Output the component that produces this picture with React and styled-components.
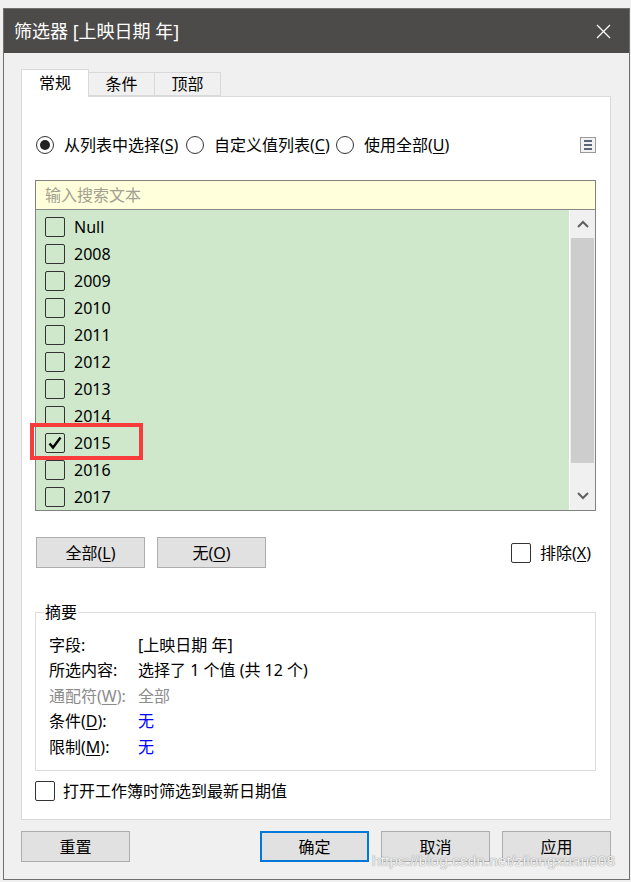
import React from 'react'
import styled, { createGlobalStyle } from 'styled-components'

const GlobalStyle = createGlobalStyle`
  body {
    margin: 0;
    background: #f0f0f0;
    font-family: "Noto Sans", "Noto Sans CJK SC", sans-serif;
    font-size: 16px;
    line-height: 20px;
    color: #000;
  }
`

const Page = styled.div`
  position: relative;
  width: 631px;
  height: 882px;
  box-sizing: border-box;
  padding: 8px 1px 2px 3px;
  background: #f0f0f0;
`

const Dialog = styled.div`
  height: 872px;
  box-sizing: border-box;
  border: 1px solid #6f6f6f;
  display: flex;
  flex-direction: column;
  background: #f0f0f0;
`

const TitleBar = styled.div`
  height: 44px;
  flex-shrink: 0;
  display: flex;
  align-items: center;
  justify-content: space-between;
  padding: 0 18px 0 10px;
  background: #4d4b49;
  color: #fff;
  font-size: 18px;
`

const Body = styled.div`
  flex: 1;
  padding: 16px 18px 0 17px;
`

const TabStrip = styled.div`
  display: flex;
  align-items: flex-end;
  height: 27px;
`

const Tab = styled.div`
  position: relative;
  width: ${p => p.w}px;
  height: ${p => (p.active ? 28 : 24)}px;
  margin-bottom: ${p => (p.active ? -1 : 0)}px;
  margin-left: ${p => (p.first ? 0 : -1)}px;
  box-sizing: border-box;
  border: 1px solid #d9d9d9;
  border-bottom: ${p => (p.active ? 'none' : '1px solid #d9d9d9')};
  background: ${p => (p.active ? '#fff' : '#f0f0f0')};
  z-index: ${p => (p.active ? 2 : 1)};
  display: flex;
  align-items: center;
  justify-content: center;
  padding-bottom: ${p => (p.active ? 2 : 0)}px;
`

const Panel = styled.div`
  height: 724px;
  box-sizing: border-box;
  border: 1px solid #d9d9d9;
  background: #fff;
  padding: 38px 14px 0 13px;
`

const RadioRow = styled.div`
  display: flex;
  align-items: center;
  height: 20px;
`

const RadioOption = styled.label`
  display: flex;
  align-items: center;
  width: ${p => p.w}px;
  gap: 10px;
  white-space: nowrap;
`

const RadioCircle = styled.span`
  width: 18px;
  height: 18px;
  margin-left: 1px;
  box-sizing: border-box;
  border: 1px solid #333;
  border-radius: 50%;
  display: flex;
  align-items: center;
  justify-content: center;
  background: #fff;

  &::after {
    content: '';
    width: 10px;
    height: 10px;
    border-radius: 50%;
    background: #222;
    display: ${p => (p.on ? 'block' : 'none')};
  }
`

const Key = styled.span`
  text-decoration: underline;
  text-underline-offset: 2px;
`

const MenuButton = styled.div`
  margin-left: auto;
  width: 16px;
  height: 16px;
  box-sizing: border-box;
  border: 1px solid #9a9a9a;
  background: #f2f2f2;
  display: flex;
  flex-direction: column;
  align-items: center;
  justify-content: center;
  gap: 2px;

  span {
    width: 8px;
    height: 2px;
    background: #5c6778;
  }
`

const ListBox = styled.div`
  margin-top: 25px;
  border: 1px solid #828282;
`

const Search = styled.div`
  height: 29px;
  box-sizing: border-box;
  border-bottom: 1px solid #8a8a8a;
  background: #ffffdc;
  padding-left: 9px;
  display: flex;
  align-items: center;
  color: #a3a08f;
`

const ListBody = styled.div`
  display: flex;
  height: 300px;
`

const Items = styled.div`
  flex: 1;
  background: #cfe8cc;
  padding-top: 3px;
  border-right: 1px solid #fff;
`

const Row = styled.div`
  position: relative;
  height: 27px;
  display: flex;
  align-items: center;
  padding-left: 9px;
  gap: 9px;
`

const Box = styled.span`
  width: ${p => p.size || 20}px;
  height: ${p => p.size || 20}px;
  flex-shrink: 0;
  box-sizing: border-box;
  border: 1px solid #333;
  border-radius: 2px;
  background: ${p => p.bg || 'transparent'};
  display: flex;
  align-items: center;
  justify-content: center;
`

const Highlight = styled.div`
  position: absolute;
  left: -6px;
  top: -6px;
  width: 113px;
  height: 37px;
  box-sizing: border-box;
  border: 4px solid #f83b3b;
`

const Scrollbar = styled.div`
  width: 25px;
  background: #f0f0f0;
  display: flex;
  flex-direction: column;
`

const ArrowCell = styled.div`
  height: 28px;
  display: flex;
  align-items: center;
  justify-content: center;
`

const Thumb = styled.div`
  height: 225px;
  margin: 0 1px;
  background: #cdcdcd;
`

const Track = styled.div`
  flex: 1;
`

const ButtonRow = styled.div`
  display: flex;
  align-items: center;
  gap: 12px;
  margin-top: 26px;
  padding-left: 1px;
`

const Button = styled.div`
  width: 109px;
  height: 31px;
  box-sizing: border-box;
  border: ${p => (p.primary ? '2px solid #0078d7' : '1px solid #adadad')};
  background: #e1e1e1;
  display: flex;
  align-items: center;
  justify-content: center;
`

const CheckOption = styled.label`
  display: flex;
  align-items: center;
  gap: ${p => p.gap}px;
  margin-left: ${p => (p.right ? 'auto' : '0')};
  padding-right: ${p => (p.right ? 5 : 0)}px;
`

const Group = styled.fieldset`
  margin: 34px 0 0 0;
  padding: 0;
  border: 1px solid #dcdcdc;
  min-width: 0;
`

const Legend = styled.legend`
  margin-left: 8px;
  padding: 0 1px;
`

const SummaryRows = styled.div`
  padding: 10px 0 10px 13px;
`

const SummaryRow = styled.div`
  display: grid;
  grid-template-columns: 89px 1fr;
  height: 25.5px;
  align-items: center;
  color: ${p => p.color || '#000'};
`

const Value = styled.span`
  color: ${p => p.color || 'inherit'};
`

const LatestRow = styled.div`
  margin-top: 10px;
`

const Footer = styled.div`
  display: flex;
  gap: 12px;
  margin-top: 11px;
`

const Spacer = styled.div`
  flex: 1;
`

const Watermark = styled.div`
  position: absolute;
  left: 372px;
  top: 851px;
  font-family: "Liberation Sans", Arial, sans-serif;
  font-size: 15.5px;
  color: rgba(255, 255, 255, 0.85);
  text-shadow: 0 0 1px #9a9a9a, 0 0 1px #9a9a9a;
  white-space: nowrap;
`

const years = ['Null', '2008', '2009', '2010', '2011', '2012', '2013', '2014', '2015', '2016', '2017']

const Chevron = ({ up }) => (
  <svg width="12" height="8" viewBox="0 0 12 8">
    <path d={up ? 'M1 7 L6 2 L11 7' : 'M1 1 L6 6 L11 1'} fill="none" stroke="#606060" strokeWidth="2" />
  </svg>
)

const Check = () => (
  <svg width="14" height="14" viewBox="0 0 14 14">
    <path d="M1.5 7.5 L5 11.5 L12.5 1.5" fill="none" stroke="#000" strokeWidth="2.4" />
  </svg>
)

export default function App() {
  return (
    <Page>
      <GlobalStyle />
      <Dialog>
        <TitleBar>
          <span>筛选器 [上映日期 年]</span>
          <svg width="15" height="15" viewBox="0 0 15 15">
            <path d="M1 1 L14 14 M14 1 L1 14" stroke="#fff" strokeWidth="1.3" />
          </svg>
        </TitleBar>
        <Body>
          <TabStrip>
            <Tab w={68} active first>常规</Tab>
            <Tab w={67}>条件</Tab>
            <Tab w={67}>顶部</Tab>
          </TabStrip>
          <Panel>
            <RadioRow>
              <RadioOption w={150}>
                <RadioCircle on />
                <span>从列表中选择(<Key>S</Key>)</span>
              </RadioOption>
              <RadioOption w={150}>
                <RadioCircle />
                <span>自定义值列表(<Key>C</Key>)</span>
              </RadioOption>
              <RadioOption w={130}>
                <RadioCircle />
                <span>使用全部(<Key>U</Key>)</span>
              </RadioOption>
              <MenuButton>
                <span />
                <span />
                <span />
              </MenuButton>
            </RadioRow>

            <ListBox>
              <Search>输入搜索文本</Search>
              <ListBody>
                <Items>
                  {years.map(y => (
                    <Row key={y}>
                      <Box>{y === '2015' && <Check />}</Box>
                      <span>{y}</span>
                      {y === '2015' && <Highlight />}
                    </Row>
                  ))}
                </Items>
                <Scrollbar>
                  <ArrowCell><Chevron up /></ArrowCell>
                  <Thumb />
                  <Track />
                  <ArrowCell><Chevron /></ArrowCell>
                </Scrollbar>
              </ListBody>
            </ListBox>

            <ButtonRow>
              <Button>全部(<Key>L</Key>)</Button>
              <Button>无(<Key>O</Key>)</Button>
              <CheckOption right gap={9}>
                <Box size={20} bg="#fff" />
                <span>排除(<Key>X</Key>)</span>
              </CheckOption>
            </ButtonRow>

            <Group>
              <Legend>摘要</Legend>
              <SummaryRows>
                <SummaryRow>
                  <span>字段:</span>
                  <Value>[上映日期 年]</Value>
                </SummaryRow>
                <SummaryRow>
                  <span>所选内容:</span>
                  <Value>选择了 1 个值 (共 12 个)</Value>
                </SummaryRow>
                <SummaryRow color="#8c8c8c">
                  <span>通配符(<Key>W</Key>):</span>
                  <Value>全部</Value>
                </SummaryRow>
                <SummaryRow>
                  <span>条件(<Key>D</Key>):</span>
                  <Value color="#0000ff">无</Value>
                </SummaryRow>
                <SummaryRow>
                  <span>限制(<Key>M</Key>):</span>
                  <Value color="#0000ff">无</Value>
                </SummaryRow>
              </SummaryRows>
            </Group>

            <LatestRow>
              <CheckOption gap={8}>
                <Box size={20} bg="#fff" />
                <span>打开工作簿时筛选到最新日期值</span>
              </CheckOption>
            </LatestRow>
          </Panel>

          <Footer>
            <Button>重置</Button>
            <Spacer />
            <Button primary>确定</Button>
            <Button>取消</Button>
            <Button>应用</Button>
          </Footer>
        </Body>
      </Dialog>
      <Watermark>https://blog.csdn.net/zilongxuan008</Watermark>
    </Page>
  )
}
